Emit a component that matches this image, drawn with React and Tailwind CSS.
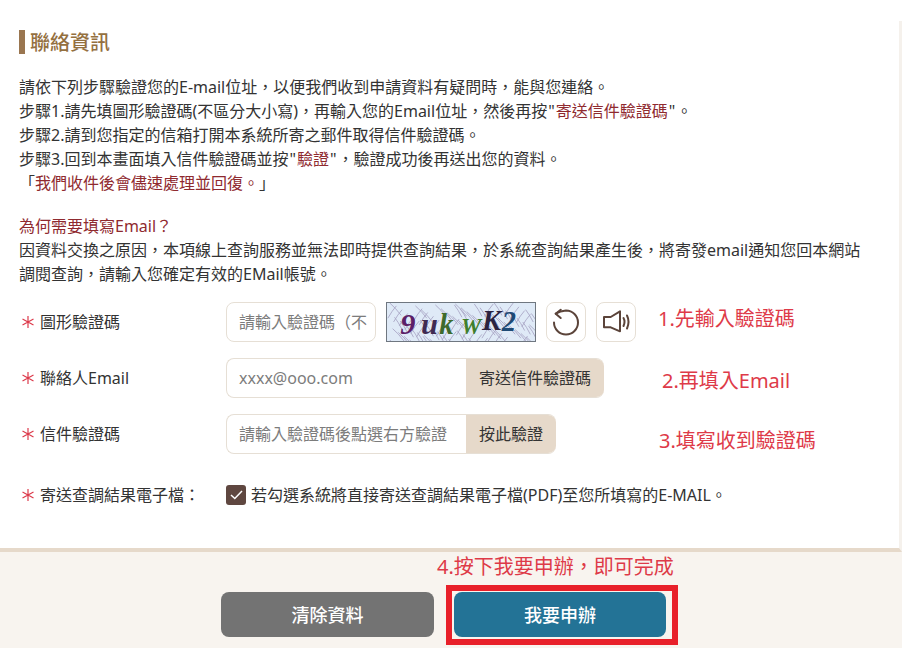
import React from 'react';

const cjk = "font-['Noto_Sans','Noto_Sans_CJK_TC',sans-serif]";

function Star() {
    return (
        <svg width="14" height="14" viewBox="0 0 14 14" className="shrink-0" fill="none" stroke="#dc3a4b" strokeWidth="1.2">
            <path d="M7 1V13M1.5 4L12.5 10M12.5 4L1.5 10" />
        </svg>
    );
}

function Label({ children }) {
    return (
        <div className="flex items-center gap-[5px] w-[226px] pl-[21px] shrink-0">
            <Star />
            <span>{children}</span>
        </div>
    );
}

function Captcha() {
    const lines = [];
    for (let i = 0; i < 90; i++) {
        const x = (i * 37) % 150;
        const y = (i * 23) % 40;
        const dx = i % 3 === 0 ? 12 : i % 3 === 1 ? -9 : 8;
        lines.push(<path key={i} d={`M${x} ${y}q${dx / 2} 5 ${dx} 13`} />);
    }
    return (
        <svg width="150" height="40" viewBox="0 0 150 40" className="shrink-0 border border-[#6f7780] bg-[#dfeaf7]">
            <g stroke="#a8a4c4" strokeWidth="0.9" fill="none">{lines}</g>
            <g fontFamily="'Liberation Serif', serif" fontWeight="700" fontStyle="italic">
                <text x="11" y="33" fontSize="32" fill="#5c1f68">9</text>
                <text x="33" y="33" fontSize="32" fill="#3f2a52">u</text>
                <text x="52" y="33" fontSize="30" fill="#3e6b2c">k</text>
                <text x="75" y="33" fontSize="24" fill="#3f7f2d">W</text>
                <text x="97" y="28" fontSize="30" fill="#2b2340">K</text>
                <text x="118" y="29" fontSize="30" fill="#1f4a75">2</text>
            </g>
        </svg>
    );
}

export default function App() {
    return (
        <div className={`w-[918px] h-[648px] bg-white overflow-hidden text-[16px] leading-[24px] text-[#333] ${cjk}`}>
            <div className="w-[902px] h-[648px] pt-[21px] flex flex-col relative">
                <div className="w-[902px] h-[531px] bg-white border-r-[3px] border-r-[#f5f1ec] border-b-[4px] border-b-[#e6d9ca] shrink-0">
                    <div className="flex items-center gap-[5px] ml-[19px] mt-[9px] h-[24px]">
                        <div className="w-[6px] h-[24px] bg-[#9a7650]" />
                        <h2 className="text-[20px] font-medium text-[#94703f] pt-[2px]">聯絡資訊</h2>
                    </div>
                    <div className="ml-[19px] mt-[21px] w-[850px]">
                        <p>請依下列步驟驗證您的E-mail位址，以便我們收到申請資料有疑問時，能與您連絡。</p>
                        <p>步驟1.請先填圖形驗證碼(不區分大小寫)，再輸入您的Email位址，然後再按<span className="px-[1px]">"</span><span className="text-[#8f2a2f]">寄送信件驗證碼</span><span className="px-[1px]">"</span>。</p>
                        <p>步驟2.請到您指定的信箱打開本系統所寄之郵件取得信件驗證碼。</p>
                        <p>步驟3.回到本畫面填入信件驗證碼並按<span className="px-[1px]">"</span><span className="text-[#8f2a2f]">驗證</span><span className="px-[1px]">"</span>，驗證成功後再送出您的資料。</p>
                        <p>「<span className="text-[#8f2a2f]">我們收件後會儘速處理並回復。</span>」</p>
                        <p className="mt-[19px] text-[#8f2a2f]">為何需要填寫Email？</p>
                        <p>因資料交換之原因，本項線上查詢服務並無法即時提供查詢結果，於系統查詢結果產生後，將寄發email通知您回本網站調閱查詢，請輸入您確定有效的EMail帳號。</p>
                    </div>

                    <div className="mt-[16px] flex flex-col gap-[16px]">
                        <div className="flex items-center h-[40px]">
                            <Label>圖形驗證碼</Label>
                            <div className="w-[150px] h-[40px] border border-[#e6dfd5] rounded-[8px] pl-[12px] flex items-center text-[#7c7c7c] overflow-hidden whitespace-nowrap">請輸入驗證碼（不</div>
                            <div className="ml-[10px]"><Captcha /></div>
                            <button className="ml-[10px] w-[40px] h-[40px] border border-[#e6dfd5] rounded-[8px] shrink-0">
                                <svg width="38" height="38" viewBox="1 1 38 38" fill="none" stroke="#5b443a" strokeWidth="2" strokeLinecap="round" strokeLinejoin="round">
                                    <path d="M9.7 11.7Q14 9 20 8.5A12 12 0 1 1 8 20.5" />
                                    <path d="M14.7 7.7L9.7 11.7L14.7 16" />
                                </svg>
                            </button>
                            <button className="ml-[10px] w-[40px] h-[40px] border border-[#e6dfd5] rounded-[8px] shrink-0">
                                <svg width="38" height="38" viewBox="1 1 38 38" fill="none" stroke="#5b443a" strokeWidth="2" strokeLinecap="round" strokeLinejoin="round">
                                    <path d="M8 15H14.7L24 9.3V29.3L14.7 25.3H8Z" />
                                    <path d="M27.5 16q2 3.5 0 8M31 13.5q3 6 0 13" />
                                </svg>
                            </button>
                            <span className="ml-[22px] mb-[6px] text-[20px] text-[#de3a48] whitespace-nowrap">1.先輸入驗證碼</span>
                        </div>
                        <div className="flex items-center h-[40px]">
                            <Label>聯絡人Email</Label>
                            <div className="w-[378px] h-[40px] border border-r-0 border-[#e6dfd5] rounded-[8px] pl-[12px] flex items-center justify-between text-[#7c7c7c] overflow-hidden">
                                <span>xxxx@ooo.com</span>
                                <span className="w-[138px] h-[40px] bg-[#e6d9ca] text-[#333] flex items-center justify-center">寄送信件驗證碼</span>
                            </div>
                            <span className="ml-[58px] mt-[6px] text-[20px] text-[#de3a48] whitespace-nowrap">2.再填入Email</span>
                        </div>
                        <div className="flex items-center h-[40px]">
                            <Label>信件驗證碼</Label>
                            <div className="w-[330px] h-[40px] border border-r-0 border-[#e6dfd5] rounded-[8px] pl-[12px] flex items-center justify-between text-[#7c7c7c] overflow-hidden whitespace-nowrap">
                                <span>請輸入驗證碼後點選右方驗證</span>
                                <span className="w-[90px] h-[40px] bg-[#e6d9ca] text-[#333] flex items-center justify-center">按此驗證</span>
                            </div>
                            <span className="ml-[103px] mt-[14px] text-[20px] text-[#de3a48] whitespace-nowrap">3.填寫收到驗證碼</span>
                        </div>
                        <div className="flex items-center h-[24px] mt-[13px]">
                            <Label>寄送查調結果電子檔：</Label>
                            <div className="w-[20px] h-[20px] bg-[#5f4740] rounded-[3px] flex items-center justify-center shrink-0">
                                <svg width="13" height="10" viewBox="0 0 13 10" fill="none" stroke="#fff" strokeWidth="1.5"><path d="M1 5L4.8 8.5L12 1" /></svg>
                            </div>
                            <span className="ml-[5px]">若勾選系統將直接寄送查調結果電子檔(PDF)至您所填寫的E-MAIL。</span>
                        </div>
                    </div>
                </div>

                <div className="flex-1 bg-[#f8f4ef] pt-[40px] pl-[221px] flex gap-[20px] relative">
                    <button className="w-[213px] h-[45px] rounded-[8px] bg-[#737373] text-white text-[18px] font-medium">清除資料</button>
                    <button className="w-[212px] h-[45px] rounded-[8px] bg-[#237396] text-white text-[18px] font-medium">我要申辦</button>
                    <div className="absolute left-[437px] top-[1px] text-[20px] leading-[28px] text-[#de3a48] whitespace-nowrap">4.按下我要申辦，即可完成</div>
                    <div className="absolute left-[446px] top-[33px] w-[232px] h-[60px] border-[6px] border-[#e8202a]" />
                </div>
            </div>
        </div>
    );
}
